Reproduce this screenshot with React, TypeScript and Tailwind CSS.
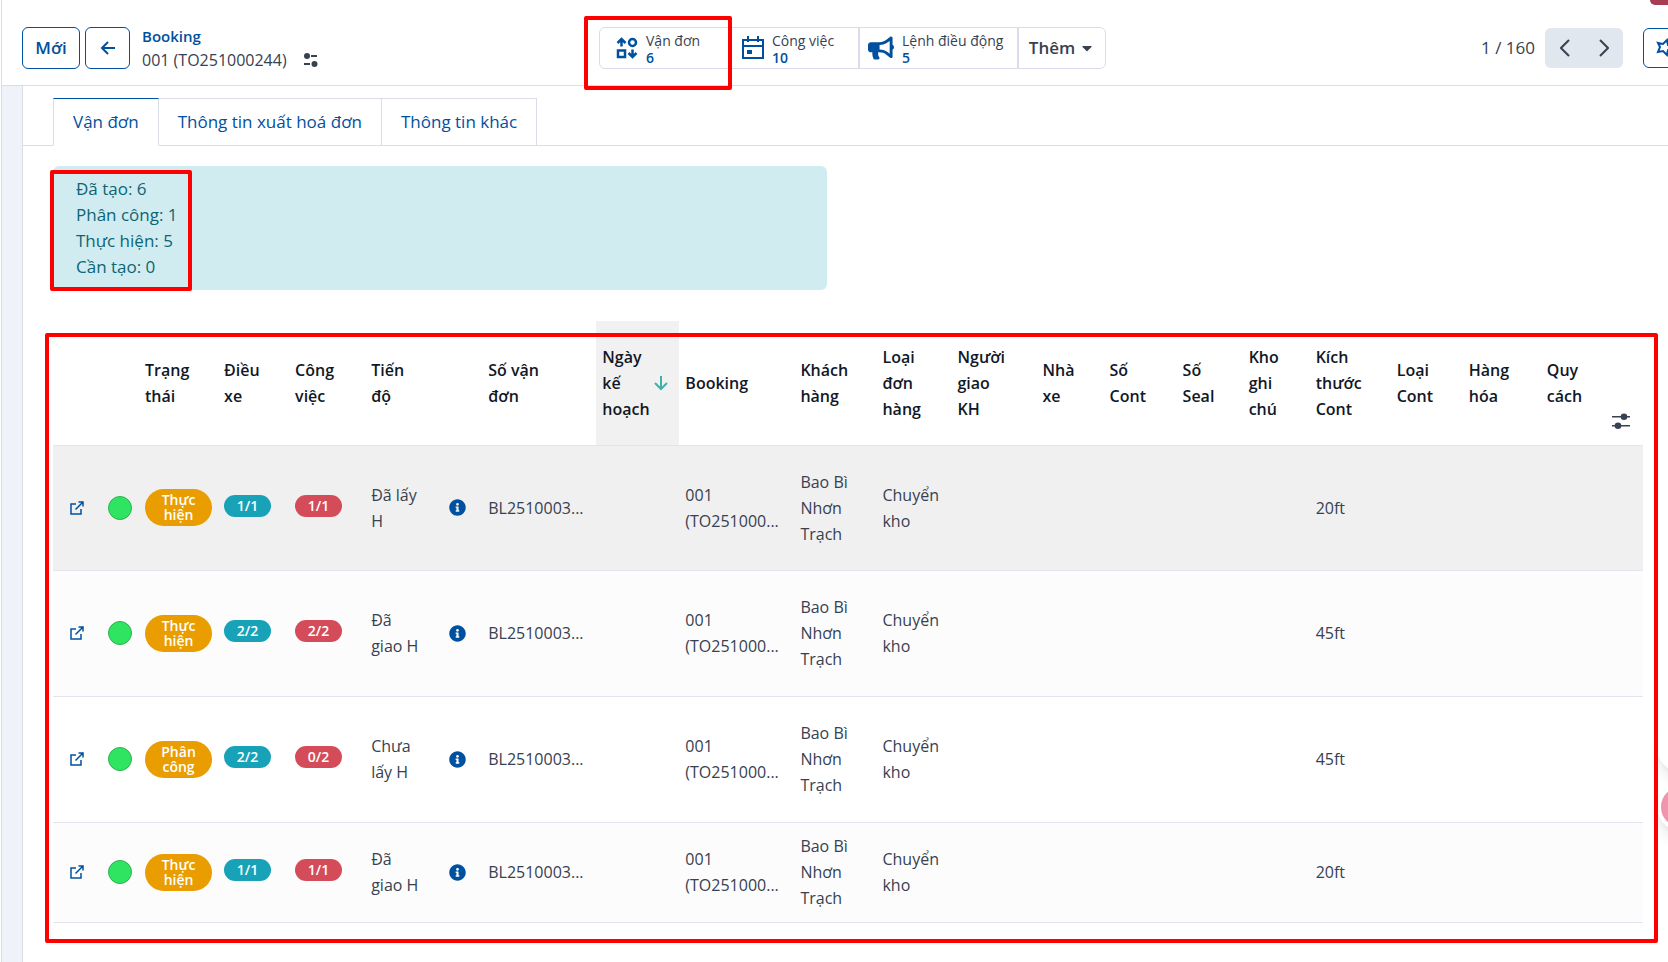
import { FaBullhorn, FaCaretDown, FaInfoCircle } from 'react-icons/fa';

const COLUMNS = [
  { label: '', width: 49 },
  { label: '', width: 37 },
  { label: 'Trạng\nthái', width: 79 },
  { label: 'Điều\nxe', width: 71 },
  { label: 'Công\nviệc', width: 76 },
  { label: 'Tiến\nđộ', width: 75 },
  { label: '', width: 42 },
  { label: 'Số vận\nđơn', width: 114 },
  { label: 'Ngày\nkế\nhoạch', width: 83, sorted: true },
  { label: 'Booking', width: 115 },
  { label: 'Khách\nhàng', width: 82 },
  { label: 'Loại\nđơn\nhàng', width: 75 },
  { label: 'Người\ngiao\nKH', width: 85 },
  { label: 'Nhà\nxe', width: 67 },
  { label: 'Số\nCont', width: 73 },
  { label: 'Số\nSeal', width: 66 },
  { label: 'Kho\nghi\nchú', width: 67 },
  { label: 'Kích\nthước\nCont', width: 81 },
  { label: 'Loại\nCont', width: 72 },
  { label: 'Hàng\nhóa', width: 78 },
  { label: 'Quy\ncách', width: 64 },
];

const ROWS = [
  { status: 'Thực\nhiện', xe: '1/1', viec: '1/1', progress: 'Đã lấy\nH', size: '20ft', style: 'h-[125px] bg-[#f0f0f0]' },
  { status: 'Thực\nhiện', xe: '2/2', viec: '2/2', progress: 'Đã\ngiao H', size: '45ft', style: 'h-[126px] bg-[#fcfcfc]' },
  { status: 'Phân\ncông', xe: '2/2', viec: '0/2', progress: 'Chưa\nlấy H', size: '45ft', style: 'h-[126px] bg-white' },
  { status: 'Thực\nhiện', xe: '1/1', viec: '1/1', progress: 'Đã\ngiao H', size: '20ft', style: 'h-[100px] bg-[#fcfcfc]' },
];

const TABS = ['Vận đơn', 'Thông tin xuất hoá đơn', 'Thông tin khác'];

const SUMMARY = ['Đã tạo: 6', 'Phân công: 1', 'Thực hiện: 5', 'Cần tạo: 0'];

function Highlight({ className }: { className: string }) {
  return <div className={`absolute z-10 rounded-xs border-4 border-[#ff0000] pointer-events-none ${className}`} />;
}

function TransferIcon() {
  return (
    <svg viewBox="0 0 22 22" className="h-[22px] w-[22px]" fill="none" stroke="currentColor" strokeWidth="2.5">
      <path d="M5.5 9.500V2M1.500 6l4-4 4 4M16.500 12.500V20M12.500 16l4 4 4-4" />
      <circle cx="16.500" cy="5.500" r="3.500" />
      <rect x="2" y="13.500" width="7" height="6.500" />
    </svg>
  );
}

function CalendarIcon() {
  return (
    <svg viewBox="0 0 22 24" className="h-6 w-[22px]" fill="none" stroke="currentColor" strokeWidth="2">
      <path d="M1 4h20v18H1zM1 10h20M6 0v6M16 0v6" />
      <rect x="5" y="14" width="5" height="4" fill="currentColor" stroke="none" />
    </svg>
  );
}

function ExternalIcon() {
  return (
    <svg viewBox="0 0 14 14" className="h-3.5 w-3.5" fill="none" stroke="currentColor" strokeWidth="1.5">
      <path d="M6 3H1v10h10V8M8.500 1H13v4.500M13 1L5.500 8.500" />
    </svg>
  );
}

function StatButton({ icon, label, value, className }: { icon: React.ReactNode; label: string; value: string; className: string }) {
  return (
    <button className={`flex h-full items-center text-left text-[#0050a0] ${className}`}>
      {icon}
      <span className="flex flex-col whitespace-nowrap pt-0.5 text-sm leading-[17px]">
        <span className="text-[#374151]">{label}</span>
        <span className="font-semibold">{value}</span>
      </span>
    </button>
  );
}

function Header() {
  return (
    <header className="flex h-[86px] items-center border-b border-[#dadde9] px-5 pt-2.5">
      <div className="flex flex-1 items-center">
        <button className="h-10.5 w-[58px] rounded-md border border-[#0050a0] text-[17px] font-semibold text-[#0050a0]">Mới</button>
        <button aria-label="Quay lại" className="ml-[5px] flex h-10.5 w-[45px] items-center justify-center rounded-md border border-[#0050a0] text-[#0050a0]">
          <svg viewBox="0 0 16 16" className="h-4 w-4" fill="none" stroke="currentColor" strokeWidth="2">
            <path d="M15 8H2M8 2L2 8l6 6" />
          </svg>
        </button>
        <div className="ml-3 flex flex-col leading-6">
          <a href="#booking" className="text-[15px] leading-6 font-semibold text-[#0050a0]">Booking</a>
          <div className="flex items-center gap-4 whitespace-nowrap text-base leading-6 text-[#374151]">
            001 (TO251000244)
            <button aria-label="Hành động">
              <svg viewBox="0 0 16 14" className="h-3.5 w-4" fill="currentColor">
                <circle cx="4" cy="3" r="3" />
                <path d="M8 2h6v2H8zM1 10h6v2H1z" />
                <circle cx="11.500" cy="11" r="3" />
              </svg>
            </button>
          </div>
        </div>
      </div>

      <div className="flex h-10.5 items-center rounded-md border border-[#dadde9]">
        <div className="relative h-full">
          <StatButton icon={<TransferIcon />} label="Vận đơn" value="6" className="w-[131px] gap-2 pl-4" />
          <Highlight className="-left-4 -top-3 -right-px h-[74px]" />
        </div>
        <StatButton icon={<CalendarIcon />} label="Công việc" value="10" className="w-[129px] gap-2 border-r-2 border-[#dadde9] pl-[11px]" />
        <StatButton icon={<FaBullhorn className="h-6 w-[26px]" />} label="Lệnh điều động" value="5" className="w-[159px] gap-2 border-r-2 border-[#dadde9] pl-2" />
        <button className="flex h-full w-[86px] items-center justify-center gap-1 text-[17px] font-semibold text-[#374151]">
          Thêm
          <FaCaretDown className="h-4 w-4" />
        </button>
      </div>

      <div className="-mr-[35px] flex flex-1 items-center justify-end">
        <span className="mr-2.5 text-[17px] text-[#374151]">1 / 160</span>
        <div className="mr-5 flex h-10 overflow-hidden rounded-md bg-[#e1e7ef] text-[#374151]">
          <button aria-label="Trước" className="flex w-[39px] items-center justify-center">
            <svg viewBox="0 0 10 18" className="h-[18px] w-2.5" fill="none" stroke="currentColor" strokeWidth="2">
              <path d="M9 1L1 9l8 8" />
            </svg>
          </button>
          <button aria-label="Sau" className="flex w-[39px] items-center justify-center">
            <svg viewBox="0 0 10 18" className="h-[18px] w-2.5" fill="none" stroke="currentColor" strokeWidth="2">
              <path d="M1 1l8 8-8 8" />
            </svg>
          </button>
        </div>
        <button aria-label="Đánh dấu" className="flex h-10 w-10 items-center rounded-md border border-[#0050a0] pl-3 text-[#0050a0]">
          <svg viewBox="0 0 20 20" className="h-5 w-5 shrink-0" fill="none" stroke="currentColor" strokeWidth="2">
            <path d="M2 5l5 1 4-4 1 5 5 3-5 2-1 5-4-4-5 1 2-5z" />
          </svg>
        </button>
      </div>
    </header>
  );
}

function ShipmentTable() {
  return (
    <table className="w-full table-fixed border-collapse text-left text-base leading-[26px] text-[#374151]">
      <colgroup>
        {COLUMNS.map((col, i) => (
          <col key={i} style={{ width: col.width }} />
        ))}
        <col className="w-[38px]" />
      </colgroup>
      <thead>
        <tr className="h-[124px] border-b border-[#e2e4ee] text-[#111827]">
          {COLUMNS.map((col, i) => (
            <th key={i} className={`whitespace-pre px-1.5 font-semibold ${col.sorted ? 'bg-[#f1f1f1]' : ''}`}>
              {col.sorted ? (
                <div className="flex items-center justify-between pr-1">
                  {col.label}
                  <svg viewBox="0 0 16 16" className="h-4 w-4 shrink-0 text-[#3fb0ac]" fill="none" stroke="currentColor" strokeWidth="2">
                    <path d="M8 1v13M2 8l6 6 6-6" />
                  </svg>
                </div>
              ) : (
                col.label
              )}
            </th>
          ))}
          <th className="px-1.5 pb-[15px] align-bottom">
            <button aria-label="Tuỳ chọn cột" className="block text-[#374151]">
              <svg viewBox="0 0 20 18" className="h-[18px] w-5" fill="currentColor">
                <path d="M1 4h18v1.500H1zM1 13h18v1.500H1z" />
                <circle cx="13" cy="4.700" r="3.300" />
                <circle cx="7" cy="13.700" r="3.300" />
              </svg>
            </button>
          </th>
        </tr>
      </thead>
      <tbody>
        {ROWS.map((row, i) => (
          <tr key={i} className={`border-b border-[#e2e4ee] ${row.style}`}>
            <td className="pl-[17px]">
              <a href="#shipment" aria-label="Mở vận đơn" className="block text-[#0050a0]">
                <ExternalIcon />
              </a>
            </td>
            <td className="px-1.5">
              <div className="h-6 w-6 rounded-full border border-[#2fb052] bg-[#2fe460]" />
            </td>
            <td className="px-1.5">
              <span className="block w-[67px] whitespace-pre rounded-[19px] bg-[#e99d00] pt-[3px] pb-1 text-center text-sm leading-[15px] font-semibold text-white">{row.status}</span>
            </td>
            <td className="px-1.5">
              <span className="mb-1 block h-[22px] w-[47px] rounded-full bg-[#17a2b8] text-center text-sm leading-[22px] font-semibold text-white">{row.xe}</span>
            </td>
            <td className="px-1.5">
              <span className="mb-1 block h-[22px] w-[47px] rounded-full bg-[#d44c59] text-center text-sm leading-[22px] font-semibold text-white">{row.viec}</span>
            </td>
            <td className="whitespace-pre px-1.5">{row.progress}</td>
            <td className="pl-[9px]">
              <button aria-label="Thông tin" className="block text-[#0050a0]">
                <FaInfoCircle className="h-[17px] w-[17px]" />
              </button>
            </td>
            <td className="px-1.5">BL2510003...</td>
            <td />
            <td className="whitespace-pre px-1.5">{'001\n(TO251000...'}</td>
            <td className="whitespace-pre px-1.5">{'Bao Bì\nNhơn\nTrạch'}</td>
            <td className="whitespace-pre px-1.5">{'Chuyển\nkho'}</td>
            <td />
            <td />
            <td />
            <td />
            <td />
            <td className="px-1.5">{row.size}</td>
            <td />
            <td />
            <td />
            <td />
          </tr>
        ))}
      </tbody>
    </table>
  );
}

export default function App() {
  return (
    <div className="relative flex min-h-screen overflow-hidden bg-white pl-px font-['Open_Sans','Noto_Sans',sans-serif]">
      <div className="flex min-w-0 flex-1 flex-col border-l border-[#dadde9]">
        <Header />

        <div className="flex flex-1 bg-[#eff3f9] pl-5">
          <main className="min-w-0 flex-1 border-l border-[#dadde9] bg-white pt-3">
            <nav className="flex border-b border-[#dadde9] pl-[31px]">
              {TABS.map((tab, i) => (
                <a
                  key={tab}
                  href="#tab"
                  className={`-mb-px -ml-px border px-[19px] py-[11px] text-[17px] leading-6 whitespace-nowrap text-[#0050a0] ${
                    i === 0 ? 'z-1 border-[#dadde9] border-t-[#0050a0] border-b-white bg-white' : 'border-[#dadde9]'
                  }`}
                >
                  {tab}
                </a>
              ))}
            </nav>

            <div className="pt-5 pr-[25px] pl-[30px]">
              <div className="relative w-[774px] max-w-full rounded-md bg-[#d1ecf0] px-[23px] py-2.5 text-[17px] leading-[26px] text-[#0c6474]">
                {SUMMARY.map((line) => (
                  <p key={line}>{line}</p>
                ))}
                <Highlight className="-bottom-px -left-[3px] top-1 w-[142px]" />
              </div>

              <div className="relative mt-[31px]">
                <ShipmentTable />
                <Highlight className="-bottom-5 -left-2 -right-[15px] top-3" />
              </div>
            </div>
          </main>
        </div>
      </div>

      {/* Floating widgets peeking in from the right edge */}
      <div className="absolute top-0 -right-8 h-[5px] w-[50px] rounded-bl-md bg-[#a83c53]" />
      <div className="absolute top-[724px] -right-[37px] h-12 w-12 rounded-full bg-white shadow-lg" />
      <div className="absolute top-[783px] -right-[37px] h-12 w-12 rounded-full border-4 border-white bg-[#f194ad] shadow-lg" />
    </div>
  );
}
